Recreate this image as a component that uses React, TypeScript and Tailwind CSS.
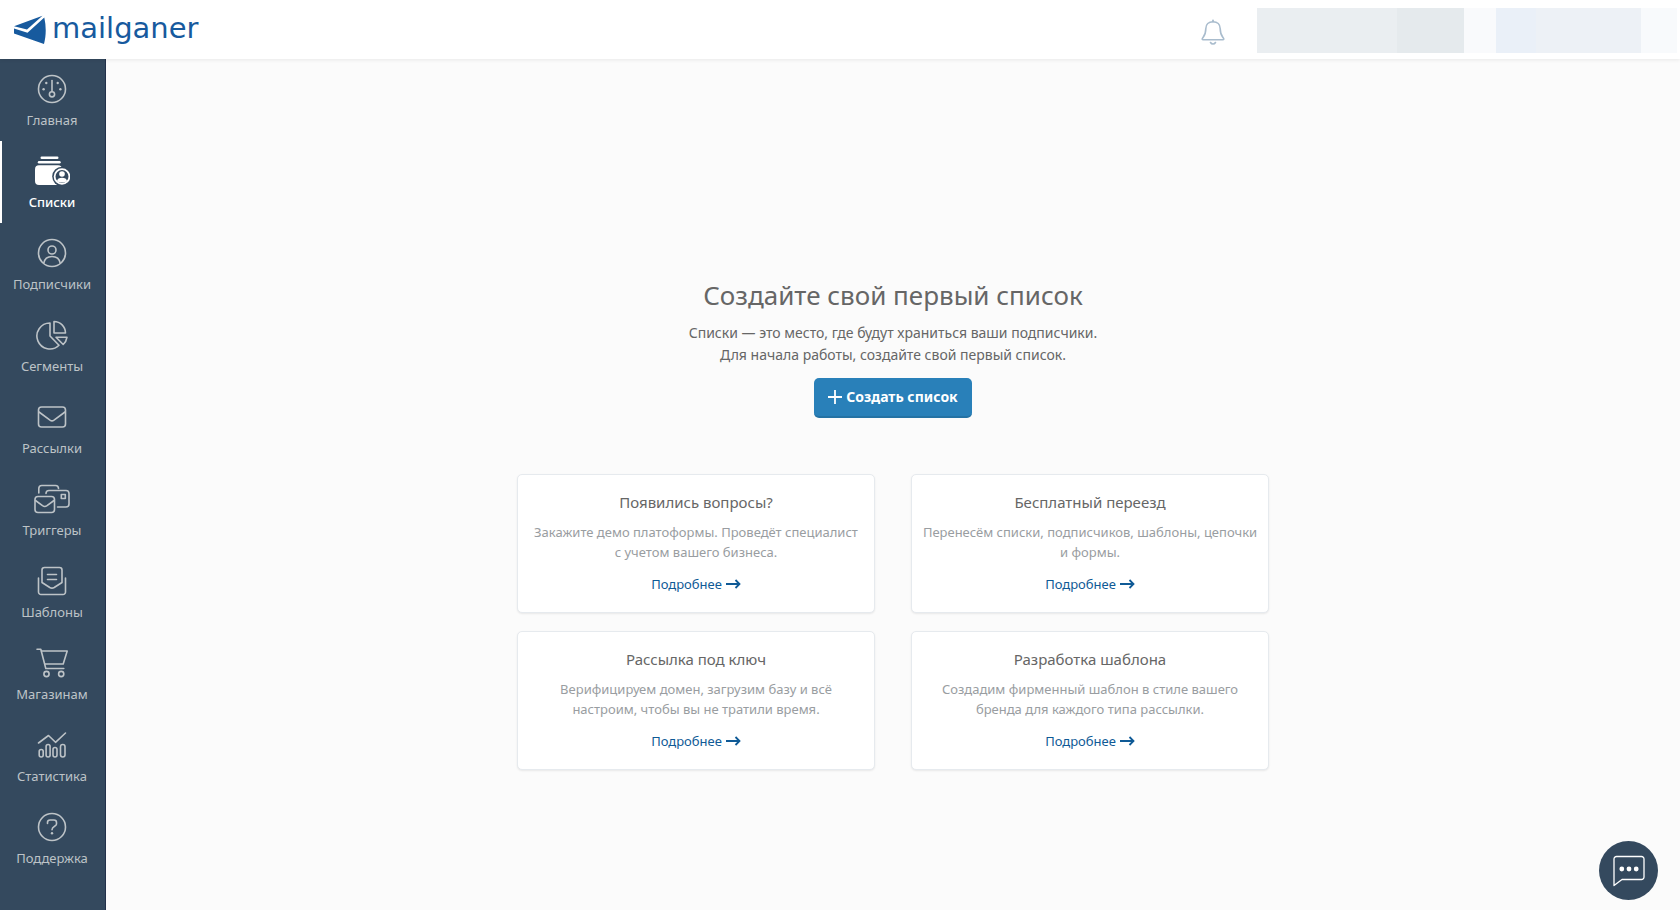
import React from "react";
import clsx from "clsx";

const IconFrame = ({ children }: { children: React.ReactNode }) => {
  return (
    <svg
      viewBox="0 0 36 30"
      fill="none"
      stroke="currentColor"
      strokeWidth="1.6"
      strokeLinecap="round"
      strokeLinejoin="round"
      className="h-[30px] w-9"
      aria-hidden="true"
    >
      {children}
    </svg>
  );
};

const HomeIcon = () => (
  <IconFrame>
    <circle cx="18" cy="15" r="13.5" />
    <path d="M18 6.5v11" />
    <circle cx="18" cy="20.3" r="2.6" />
    <g fill="currentColor" stroke="none">
      <circle cx="12.3" cy="9" r="1.2" />
      <circle cx="23.7" cy="9" r="1.2" />
      <circle cx="9.6" cy="15.2" r="1.2" />
      <circle cx="26.4" cy="15.2" r="1.2" />
    </g>
  </IconFrame>
);

const ListsIcon = () => (
  <IconFrame>
    <path d="M7.7 1.8h15.6" strokeWidth="2.4" />
    <path d="M5 6.3h20.5" strokeWidth="2.4" />
    <rect x="1" y="9.3" width="27" height="19.7" rx="4" fill="currentColor" stroke="none" />
    <circle cx="28" cy="20.5" r="9.8" fill="#34495e" stroke="none" />
    <circle cx="28" cy="20.5" r="7.4" strokeWidth="1.8" />
    <circle cx="28" cy="18" r="2.8" fill="currentColor" stroke="none" />
    <path d="M23 25.2c0-4.6 10-4.6 10 0-2.6 1.8-7.4 1.8-10 0z" fill="currentColor" stroke="none" />
  </IconFrame>
);

const SubscribersIcon = () => (
  <IconFrame>
    <circle cx="18" cy="15" r="13.5" />
    <circle cx="18" cy="12" r="4" />
    <path d="M9.8 25.2c.8-4.8 4-6.7 8.2-6.7s7.4 1.9 8.2 6.7" />
  </IconFrame>
);

const SegmentsIcon = () => (
  <IconFrame>
    <path d="M16 3v13l9 9.3A13 13 0 1 1 16 3z" />
    <path d="M20 1.5v11.5h11.5A11.5 11.5 0 0 0 20 1.5z" />
    <path d="M22 17.2h11a12 12 0 0 1-3.8 7.3z" />
  </IconFrame>
);

const MailIcon = () => (
  <IconFrame>
    <rect x="4.5" y="5" width="27" height="20" rx="3" />
    <path d="M5 10l11 8.2c1.3.9 2.7.9 4 0L31 10" />
  </IconFrame>
);

const TriggersIcon = () => (
  <IconFrame>
    <rect x="1" y="12.5" width="19.5" height="16" rx="3" />
    <path d="M1.5 16.5l7 5.2c1.5 1 3 1 4.5 0l7-5.2" />
    <path d="M4.8 9V4.5a3 3 0 0 1 3-3h13.7a3 3 0 0 1 3 3" />
    <path d="M12 9.5a3 3 0 0 1 3-3h17a3 3 0 0 1 3 3V20a3 3 0 0 1-3 3h-8.5" />
    <rect x="27.3" y="10.5" width="4" height="4" />
  </IconFrame>
);

const TemplatesIcon = () => (
  <IconFrame>
    <path d="M8 16.5V4a2.5 2.5 0 0 1 2.5-2.5h15A2.5 2.5 0 0 1 28 4v12.5l-7.8 5c-1.5.9-2.9.9-4.4 0z" />
    <path d="M4.5 12v14a2.5 2.5 0 0 0 2.5 2.5h22a2.5 2.5 0 0 0 2.5-2.5V12" />
    <path d="M13.5 8.5h9M13.5 13.5h9" />
  </IconFrame>
);

const ShopIcon = () => (
  <IconFrame>
    <path d="M3 1.2h3.8l5 19.3h18" />
    <path d="M7.5 3h25.7l-4 13H11" />
    <circle cx="12.5" cy="26" r="2.6" />
    <circle cx="27.2" cy="26" r="2.6" />
  </IconFrame>
);

const StatsIcon = () => (
  <IconFrame>
    <path d="M4.5 13l10-7.5 7 6.8L31.5 3" />
    <rect x="5.2" y="19.5" width="4" height="7.5" rx="2" />
    <rect x="12.1" y="14.5" width="4" height="12.5" rx="2" />
    <rect x="19" y="17.5" width="4" height="9.5" rx="2" />
    <rect x="26.5" y="14.5" width="4.5" height="12.5" rx="2.2" />
  </IconFrame>
);

const SupportIcon = () => (
  <IconFrame>
    <circle cx="18" cy="15" r="13.5" />
    <path d="M13.5 11.5v-1c0-2 1-2.5 2.5-2.5h4c1.5 0 2.5.7 2.5 2.5V12c0 2.5-4.5 2-4.5 5.8" />
    <circle cx="18" cy="21.3" r="1.2" fill="currentColor" stroke="none" />
  </IconFrame>
);

const BellIcon = () => (
  <svg
    viewBox="0 0 24 26"
    fill="none"
    stroke="currentColor"
    strokeWidth="1.6"
    strokeLinecap="round"
    strokeLinejoin="round"
    className="h-[26px] w-6"
    aria-hidden="true"
  >
    <path d="M12 1.5v1" strokeWidth="2" />
    <path d="M12 2.7c-4.3 0-7.2 2.8-7.2 7 0 5.5-1 6.5-3 9-1 1.3-.7 2.1.5 2.1h19.4c1.2 0 1.5-.8.5-2.1-2-2.5-3-3.500-3-9 0-4.200-2.900-7-7.200-7z" />
    <path d="M9.5 23.5c1.2 2 3.8 2 5 0" />
  </svg>
);

const Logo = () => {
  return (
    <a href="#" className="flex items-center gap-[6px] text-[#175a9e]">
      <svg viewBox="0 0 32 30" className="h-[30px] w-8" aria-hidden="true">
        <path d="M0 11.2L28.5.8 13 14.5z" fill="currentColor" />
        <path d="M0 13.5l13.5 4.3L30.3 2.5c2 9 1.900 18-.3 26.500L0 18.500z" fill="currentColor" />
      </svg>
      <span className="pb-1 font-['DejaVu_Sans',sans-serif] text-[29px] leading-8">
        mailganer
      </span>
    </a>
  );
};

const menu = [
  { label: "Главная", icon: <HomeIcon /> },
  { label: "Списки", icon: <ListsIcon />, active: true },
  { label: "Подписчики", icon: <SubscribersIcon /> },
  { label: "Сегменты", icon: <SegmentsIcon /> },
  { label: "Рассылки", icon: <MailIcon /> },
  { label: "Триггеры", icon: <TriggersIcon /> },
  { label: "Шаблоны", icon: <TemplatesIcon /> },
  { label: "Магазинам", icon: <ShopIcon /> },
  { label: "Статистика", icon: <StatsIcon /> },
  { label: "Поддержка", icon: <SupportIcon /> },
];

const cards = [
  {
    title: "Появились вопросы?",
    lines: ["Закажите демо платоформы. Проведёт специалист", "с учетом вашего бизнеса."],
  },
  {
    title: "Бесплатный переезд",
    lines: ["Перенесём списки, подписчиков, шаблоны, цепочки", "и формы."],
  },
  {
    title: "Рассылка под ключ",
    lines: ["Верифицируем домен, загрузим базу и всё", "настроим, чтобы вы не тратили время."],
  },
  {
    title: "Разработка шаблона",
    lines: ["Создадим фирменный шаблон в стиле вашего", "бренда для каждого типа рассылки."],
  },
];

const Header = () => {
  return (
    <header className="relative z-10 flex h-[59px] items-center justify-between bg-white pr-[3px] pl-[14px] shadow-[0_1px_4px_rgba(0,0,0,0.08)]">
      <Logo />
      <div className="flex items-center gap-8">
        <button type="button" aria-label="Уведомления" className="mt-1 text-[#a9bccd]">
          <BellIcon />
        </button>
        <div className="mt-[2px] flex h-[45px]">
          <div className="w-[140px] bg-[#eaeef1]" />
          <div className="w-[67px] bg-[#e5eaed]" />
          <div className="w-8 bg-[#f9fafc]" />
          <div className="w-10 bg-[#eaf0f8]" />
          <div className="w-[105px] bg-[#edf1f6]" />
          <div className="w-9 bg-[#f8fafc]" />
        </div>
      </div>
    </header>
  );
};

const Sidebar = () => {
  return (
    <nav className="w-[106px] shrink-0 border-r border-[#22304a] bg-[#34495e]">
      {menu.map((item) => (
        <a
          key={item.label}
          href="#"
          className={clsx(
            "flex h-[82px] flex-col items-center border-l-2 pt-[15px] pr-[3px] text-[13px] leading-5",
            item.active
              ? "border-white font-medium text-white"
              : "border-transparent text-[#bdc3c7]",
          )}
        >
          {item.icon}
          <span className="mt-[6px]">{item.label}</span>
        </a>
      ))}
    </nav>
  );
};

const Card = ({ title, lines }: { title: string; lines: string[] }) => {
  return (
    <div className="flex flex-col items-center rounded-[5px] border border-[#e6eaee] bg-white pt-[15px] pb-[18px] text-center shadow-[0_1px_2px_rgba(0,0,0,0.08)]">
      <h2 className="text-[15px] leading-6 text-[#666]">{title}</h2>
      <p className="mt-2 text-[13px] leading-5 whitespace-nowrap text-[#999da1]">
        {lines[0]}
        <br />
        {lines[1]}
      </p>
      <a href="#" className="mt-3 flex items-center gap-1 text-[13px] leading-5 text-[#0f5a96]">
        Подробнее
        <svg
          viewBox="0 0 15 10"
          fill="none"
          stroke="currentColor"
          strokeWidth="1.8"
          className="h-[10px] w-[15px]"
          aria-hidden="true"
        >
          <path d="M0 5h13.5M9.5 1l4 4-4 4" />
        </svg>
      </a>
    </div>
  );
};

export default function App() {
  return (
    <div className="flex min-h-screen flex-col bg-[#fbfbfb] font-['Noto_Sans',sans-serif] text-[#666]">
      <Header />
      <div className="flex flex-1">
        <Sidebar />
        <main className="flex flex-1 flex-col items-center pt-[216px]">
          <h1 className="text-[26px] leading-10">Создайте свой первый список</h1>
          <p className="mt-[7px] text-center text-sm leading-[22px]">
            Списки — это место, где будут храниться ваши подписчики.
            <br />
            Для начала работы, создайте свой первый список.
          </p>
          <button
            type="button"
            className="mt-3 flex h-10 items-center gap-1 rounded-[5px] border-b-2 border-[#2472a4] bg-[#2980b9] px-[14px] text-sm font-bold text-white"
          >
            <svg
              viewBox="0 0 14 14"
              stroke="currentColor"
              strokeWidth="1.8"
              className="size-[14px]"
              aria-hidden="true"
            >
              <path d="M7 0v14M0 7h14" />
            </svg>
            Создать список
          </button>
          <div className="mt-14 grid w-full max-w-[752px] grid-cols-2 gap-x-9 gap-y-[18px]">
            {cards.map((card) => (
              <Card key={card.title} {...card} />
            ))}
          </div>
        </main>
      </div>
      <button
        type="button"
        aria-label="Чат"
        className="fixed right-[22px] bottom-[10px] flex size-[59px] items-center justify-center rounded-full bg-[#34495e] text-white"
      >
        <svg viewBox="0 0 32 32" fill="none" stroke="currentColor" className="size-8" aria-hidden="true">
          <path
            d="M1 4a2.5 2.5 0 0 1 2.5-2.5h25A2.5 2.5 0 0 1 31 4v18a2.5 2.5 0 0 1-2.500 2.500H9L1 30.500z"
            strokeWidth="1.3"
            strokeLinejoin="round"
          />
          <g fill="currentColor" stroke="none">
            <circle cx="8.8" cy="14" r="2.4" />
            <circle cx="16" cy="14" r="2.4" />
            <circle cx="23.2" cy="14" r="2.4" />
          </g>
        </svg>
      </button>
    </div>
  );
}
